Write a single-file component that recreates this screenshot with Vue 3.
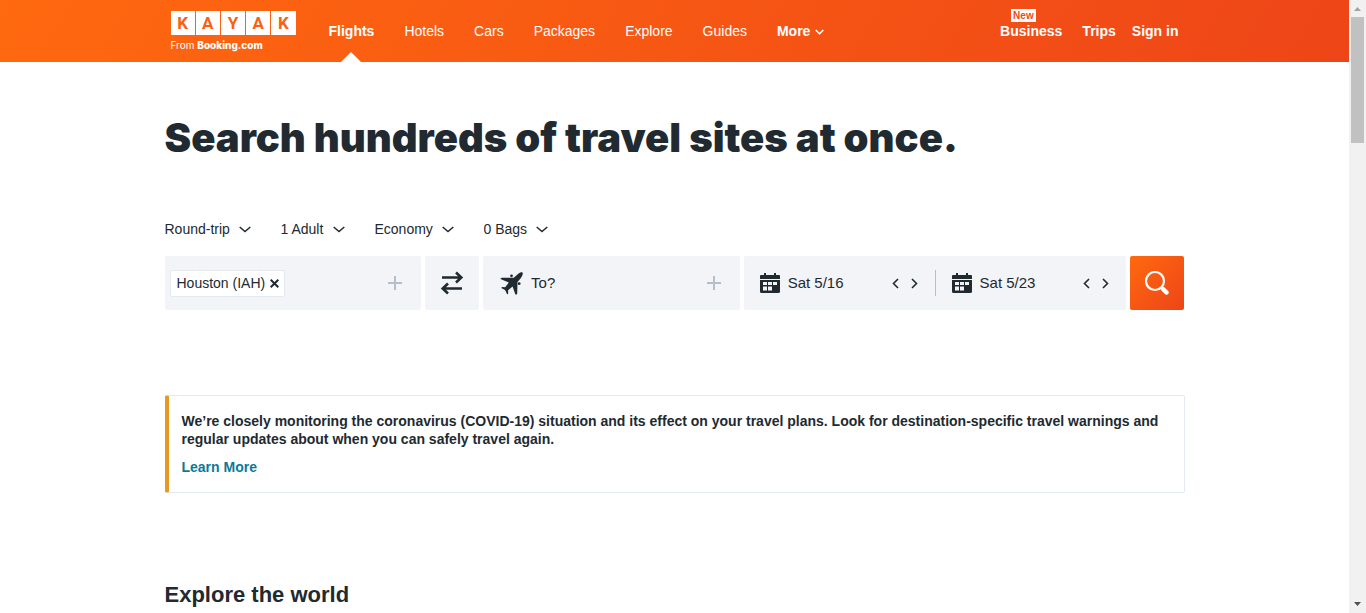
<script setup>
import { ref } from 'vue'

const logoLetters = ['K', 'A', 'Y', 'A', 'K']
const links = ['Flights', 'Hotels', 'Cars', 'Packages', 'Explore', 'Guides']
const filters = [
  { label: 'Trip type', options: ['Round-trip', 'One-way'] },
  { label: 'Travelers', options: ['1 Adult'] },
  { label: 'Cabin class', options: ['Economy', 'First'] },
  { label: 'Bags', options: ['0 Bags', '1 Bag'] }
]
const dates = [
  { name: 'Departure', text: 'Sat 5/16' },
  { name: 'Return', text: 'Sat 5/23' }
]
const origin = ref('')
const destination = ref('')
</script>

<template>
  <div class="shell">
    <div class="page">
      <header class="header">
        <div class="wrap bar">
          <a class="logo" href="#" aria-label="KAYAK">
            <span class="tiles">
              <span v-for="(l, i) in logoLetters" :key="i" class="tile">{{ l }}</span>
            </span>
            <span class="tagline">From <b>Booking.com</b></span>
          </a>
          <nav class="nav">
            <a v-for="(l, i) in links" :key="l" href="#" :class="{ active: i === 0 }">{{ l }}</a>
            <button class="more" type="button">
              More
              <svg width="9" height="7" viewBox="0 0 9 7"><path d="M.7 2 4.500 5.800 8.300 2" fill="none" stroke="currentColor" stroke-width="1.5" /></svg>
            </button>
          </nav>
          <nav class="account">
            <a class="business" href="#">Business<span class="badge">New</span></a>
            <a href="#">Trips</a>
            <a href="#">Sign in</a>
          </nav>
        </div>
      </header>

      <main class="wrap">
        <h1>Search hundreds of travel sites at once.</h1>

        <form @submit.prevent>
          <div class="filters">
            <label v-for="f in filters" :key="f.label" class="filter">
              <select :aria-label="f.label">
                <option v-for="o in f.options" :key="o">{{ o }}</option>
              </select>
              <svg width="12" height="8" viewBox="0 0 12 8"><path d="M.7 2 6 6.500 11.300 2" fill="none" stroke="currentColor" stroke-width="1.5" /></svg>
            </label>
          </div>

          <div class="search">
            <div class="cell origin">
              <span class="chip">
                Houston (IAH)
                <button type="button" aria-label="Remove Houston">
                  <svg width="9" height="9" viewBox="0 0 9 9"><path d="M.7.7l7.600 7.600M8.300.7.7 8.300" stroke="currentColor" stroke-width="2" /></svg>
                </button>
              </span>
              <input v-model="origin" aria-label="From" type="text" />
              <button class="plus" type="button" aria-label="Add origin">
                <svg width="14" height="14" viewBox="0 0 14 14"><path d="M7 0v14M0 7h14" stroke="currentColor" stroke-width="2" /></svg>
              </button>
            </div>

            <button class="cell swap" type="button" aria-label="Swap">
              <svg width="24" height="24" viewBox="0 0 24 24" fill="none" stroke="currentColor" stroke-width="2.600">
                <path d="M2 6.500h19M16 1.500l5.300 5-5.300 5M22 17.500H3M8 12.500l-5.300 5 5.300 5" />
              </svg>
            </button>

            <div class="cell destination">
              <svg class="plane" width="23" height="23" viewBox="0 0 23 23" fill="currentColor">
                <path d="M22.500.5C21.500-.1 19.800.5 18 2.100l-4.200 3.700L2 5.700.300 6.500 1 7.300l7.800 3.200-3.600 4.700-3.200-.3-.7 1.100 3.300 1.700.9 1 1.700 3.700 1-.9-.1-3.300 4.500-3.700 2.700 7.800.9.500 1-1.100.3-11.800 3.400-4C22.500 3.900 23.200 1.300 22.500.5Z" />
                <circle cx="11.500" cy="3.800" r="1.400" /><circle cx="19.200" cy="11.700" r="1.400" />
              </svg>
              <input v-model="destination" aria-label="To" type="text" placeholder="To?" />
              <button class="plus" type="button" aria-label="Add destination">
                <svg width="14" height="14" viewBox="0 0 14 14"><path d="M7 0v14M0 7h14" stroke="currentColor" stroke-width="2" /></svg>
              </button>
            </div>

            <div class="cell dates">
              <div v-for="d in dates" :key="d.name" class="date">
                <button class="day" type="button" :aria-label="d.name + ' ' + d.text">
                  <svg width="20" height="20" viewBox="0 0 20 20">
                    <path fill="currentColor" d="M1 2h3V0h2v2h8V0h2v2h3a1 1 0 0 1 1 1v3H0V3a1 1 0 0 1 1-1ZM0 7h20v11.500a1.500 1.500 0 0 1-1.500 1.500h-17A1.500 1.500 0 0 1 0 18.500Z" />
                    <path fill="#f2f4f7" d="M3 9h4v3H3zM8 9h4v3H8zM13 9h4v3h-4zM3 13.500h4v4H3zM8 13.500h4v4H8z" />
                  </svg>
                  {{ d.text }}
                </button>
                <span class="steps">
                  <button type="button" :aria-label="d.name + ' one day earlier'">
                    <svg width="7" height="11" viewBox="0 0 7 11"><path d="M6 1 1.500 5.500 6 10" fill="none" stroke="currentColor" stroke-width="1.600" /></svg>
                  </button>
                  <button type="button" :aria-label="d.name + ' one day later'">
                    <svg width="7" height="11" viewBox="0 0 7 11"><path d="M1 1 5.500 5.500 1 10" fill="none" stroke="currentColor" stroke-width="1.600" /></svg>
                  </button>
                </span>
              </div>
            </div>

            <button class="go" type="submit" aria-label="Search">
              <svg width="24" height="24" viewBox="0 0 24 24" fill="none" stroke="currentColor">
                <circle cx="10" cy="10" r="9" stroke-width="2.200" />
                <path d="m16.500 16.500 2 2" stroke-width="2.500" />
                <path d="m18.500 18.500 3 3" stroke-width="4.500" stroke-linecap="round" />
              </svg>
            </button>
          </div>
        </form>

        <section class="alert">
          <p>We’re closely monitoring the coronavirus (COVID-19) situation and its effect on your travel plans. Look for destination-specific travel warnings and regular updates about when you can safely travel again.</p>
          <a href="#">Learn More</a>
        </section>

        <h2>Explore the world</h2>
      </main>
    </div>

    <div class="scrollbar" aria-hidden="true">
      <svg width="7" height="4" viewBox="0 0 7 4"><path d="M0 4 3.500 0 7 4Z" fill="#a3a3a3" /></svg>
      <span class="thumb"></span>
      <svg width="7" height="4" viewBox="0 0 7 4"><path d="M0 0h7L3.500 4Z" fill="#505050" /></svg>
    </div>
  </div>
</template>

<style>
body {
  background: #fff;
}
</style>

<style scoped>
.shell {
  display: grid;
  grid-template-columns: minmax(0, 1fr) 17px;
  min-height: 100vh;
  font: 14px/18px "Liberation Sans", Arial, sans-serif;
  color: #212a31;
}
.shell * {
  box-sizing: border-box;
}
svg {
  display: block;
  flex: none;
}
a {
  color: inherit;
  text-decoration: none;
}
button,
select,
input {
  margin: 0;
  padding: 0;
  border: 0;
  background: none;
  color: inherit;
  font: inherit;
}
button {
  cursor: pointer;
}
.wrap {
  width: 100%;
  max-width: 1020px;
  margin: 0 auto;
}
.header {
  background: linear-gradient(120deg, #ff690f, #ee4518);
  color: #fff;
}
.bar {
  display: flex;
  height: 62px;
  padding: 0 6px;
}
.logo {
  width: 125px;
  margin-right: 33px;
  padding-top: 11px;
}
.tiles {
  display: grid;
  grid-template-columns: repeat(5, 1fr);
  gap: 1px;
}
.tile {
  height: 24px;
  background: #fff;
  color: #fb6012;
  font: 700 17px/25px Roboto, sans-serif;
  text-align: center;
}
.tagline {
  display: block;
  font: 10px/20px Inter, sans-serif;
  white-space: nowrap;
}
.tagline b {
  font-weight: 800;
}
.nav,
.account {
  display: flex;
  align-items: stretch;
  line-height: 62px;
}
.nav {
  gap: 30px;
}
.active {
  position: relative;
  font-weight: 700;
}
.active::after {
  content: "";
  position: absolute;
  left: 50%;
  bottom: 0;
  margin-left: -10px;
  border: 10px solid transparent;
  border-top: 0;
  border-bottom-color: #fff;
}
.more {
  display: flex;
  align-items: center;
  gap: 5px;
  font-weight: 700;
}
.account {
  gap: 16px;
  margin-left: auto;
  font-weight: 700;
}
.business {
  position: relative;
  margin-right: 4px;
}
.badge {
  position: absolute;
  top: 9px;
  left: 11px;
  padding: 0 2px;
  background: #fff;
  color: #ef4a18;
  font-size: 10px;
  line-height: 13px;
}
h1 {
  margin: 52px 0 55px;
  font: 900 40px/48px Inter, sans-serif;
}
.filters {
  display: flex;
  gap: 30px;
  height: 24px;
  margin-bottom: 15px;
}
.filter {
  display: flex;
  align-items: center;
  gap: 8px;
}
select {
  appearance: none;
}
.search {
  display: grid;
  grid-template-columns: 256fr 54px 256fr 382fr 54px;
  gap: 4px;
  height: 54px;
}
.cell {
  display: flex;
  align-items: center;
  min-width: 0;
  border-radius: 2px;
  background: #f2f4f7;
}
.cell input {
  flex: 1;
  min-width: 0;
  outline: 0;
}
.origin {
  padding: 0 19px 0 5px;
}
.chip {
  display: flex;
  align-items: center;
  gap: 5px;
  height: 27px;
  padding: 0 5px 0 6px;
  border: 1px solid #e5e9f0;
  border-radius: 2px;
  background: #fff;
  white-space: nowrap;
}
.plus {
  color: #b4bfca;
}
.swap {
  justify-content: center;
}
.destination {
  gap: 8px;
  padding: 0 19px 0 17px;
  font-size: 15px;
}
.destination input::placeholder {
  color: #212a31;
  opacity: 1;
}
.dates {
  font-size: 15px;
}
.date {
  display: flex;
  flex: 1;
  align-items: center;
  justify-content: space-between;
  height: 26px;
  padding: 0 17px 0 16px;
}
.date + .date {
  border-left: 1px solid #b4bfca;
}
.day {
  display: flex;
  align-items: center;
  gap: 8px;
}
.steps {
  display: flex;
  gap: 12px;
}
.go {
  display: grid;
  place-items: center;
  border-radius: 2px;
  background: linear-gradient(135deg, #ff690f, #ee4518);
  color: #fff;
}
.alert {
  margin: 85px 0 88px;
  padding: 16px 13px;
  border: 1px solid #e5e9f0;
  border-left: 4px solid #e59a25;
  border-radius: 2px;
  font-weight: 700;
}
.alert p {
  margin: 0 0 10px;
}
.alert a {
  display: block;
  color: #0b7a99;
}
h2 {
  margin: 0;
  font-size: 22px;
  line-height: 28px;
}
.scrollbar {
  display: flex;
  flex-direction: column;
  align-items: center;
  padding: 7px 0;
  background: #f1f1f1;
}
.thumb {
  width: 13px;
  height: 126px;
  margin: 6px 0 auto;
  background: #c1c1c1;
}
</style>
